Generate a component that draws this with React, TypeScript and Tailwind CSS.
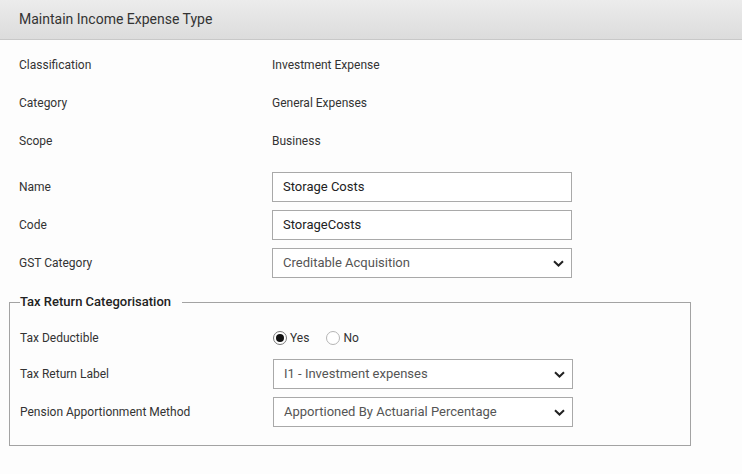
import React from 'react';

const Chevron = () => (
  <svg width="11" height="7" viewBox="0 0 11 7" className="shrink-0">
    <path d="M1 1.2 L5.5 5.5 L10 1.2" fill="none" stroke="#222" strokeWidth="2" />
  </svg>
);

const StaticRow = ({ label, value }: { label: string; value: string }) => (
  <div className="flex h-[38px] items-center pl-[10px] text-[12px] text-[#333]">
    <div className="w-[253px] shrink-0">{label}</div>
    <div>{value}</div>
  </div>
);

const InputRow = ({ label, value }: { label: string; value: string }) => (
  <div className="flex items-center pl-[10px] text-[12px] text-[#333]">
    <div className="w-[253px] shrink-0">{label}</div>
    <div className="flex h-[30px] w-[300px] items-center border border-[#a9a9a9] bg-white px-[10px] text-[13px] text-[#222]">
      {value}
    </div>
  </div>
);

const SelectBox = ({ value }: { value: string }) => (
  <div className="flex h-[30px] w-[300px] items-center justify-between border border-[#a9a9a9] bg-white pl-[10px] pr-[7px] text-[13px] text-[#555]">
    <span>{value}</span>
    <Chevron />
  </div>
);

const Radio = ({ checked, label }: { checked?: boolean; label: string }) => (
  <label className="flex items-center gap-[3px]">
    <span
      className={
        checked
          ? 'flex h-[14px] w-[14px] items-center justify-center rounded-full border border-[#777] bg-white'
          : 'flex h-[14px] w-[14px] items-center justify-center rounded-full border border-[#b5b5b5] bg-white'
      }
    >
      {checked && <span className="h-[8px] w-[8px] rounded-full bg-[#111]" />}
    </span>
    <span>{label}</span>
  </label>
);

export default function App() {
  return (
    <div
      className="h-[474px] w-[742px] bg-[#fdfdfd]"
      style={{ fontFamily: 'Roboto, "Liberation Sans", sans-serif' }}
    >
      {/* Header */}
      <div className="flex h-[40px] items-center border-b border-[#c8c8c8] bg-gradient-to-b from-[#ececec] to-[#dcdcdc] pl-[19px] text-[14px] text-[#333]">
        Maintain Income Expense Type
      </div>

      <div className="px-[9px] pt-[6px]">
        <StaticRow label="Classification" value="Investment Expense" />
        <StaticRow label="Category" value="General Expenses" />
        <StaticRow label="Scope" value="Business" />

        <div className="mt-[12px] flex flex-col gap-[8px]">
          <InputRow label="Name" value="Storage Costs" />
          <InputRow label="Code" value="StorageCosts" />
          <div className="flex items-center pl-[10px] text-[12px] text-[#333]">
            <div className="w-[253px] shrink-0">GST Category</div>
            <SelectBox value="Creditable Acquisition" />
          </div>
        </div>

        {/* Tax return fieldset */}
        <fieldset className="mt-[16px] w-[682px] border border-[#a3a3a3] px-[10px] pb-[18px]">
          <legend className="pr-[11px] text-[13px] leading-4 font-medium text-[#222]">
            Tax Return Categorisation
          </legend>
          <div className="flex flex-col pt-[13px] text-[12px] text-[#333]">
            <div className="flex h-[30px] items-center">
              <div className="w-[253px] shrink-0">Tax Deductible</div>
              <div className="flex items-center gap-[17px]">
                <Radio checked label="Yes" />
                <Radio label="No" />
              </div>
            </div>
            <div className="mt-[6px] flex items-center">
              <div className="w-[253px] shrink-0">Tax Return Label</div>
              <SelectBox value="I1 - Investment expenses" />
            </div>
            <div className="mt-[8px] flex items-center">
              <div className="w-[253px] shrink-0">Pension Apportionment Method</div>
              <SelectBox value="Apportioned By Actuarial Percentage" />
            </div>
          </div>
        </fieldset>
      </div>
    </div>
  );
}
